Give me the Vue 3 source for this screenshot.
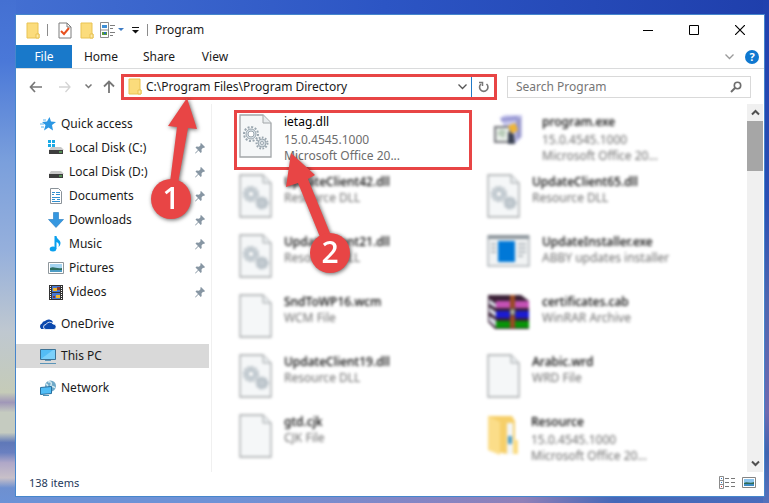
<template>
  <div class="desktop">
    <main class="window">
      <header class="titlebar">
        <svg class="qa-folder" width="14" height="17" viewBox="0 0 14 17">
          <path d="M1 1h11v11h1v4H1z" fill="#fbdc7c" stroke="#e9c353" />
          <path d="M10 16v-4h3v4z" fill="#fce9a8" stroke="#e9c353" />
        </svg>
        <span class="divider"></span>
        <button class="tool tool--check" aria-label="Properties">
          <svg width="14" height="17" viewBox="0 0 14 17">
            <path d="M1 1h8l4 4v11H1z" fill="#fff" stroke="#7d7d7d" />
            <path d="M9 1v4h4" fill="none" stroke="#7d7d7d" />
            <path d="M3 9l3 3 5-6" fill="none" stroke="#e8501e" stroke-width="2" />
          </svg>
        </button>
        <button class="tool tool--folder" aria-label="New folder">
          <svg width="14" height="17" viewBox="0 0 14 17">
            <path d="M1 1h11v11h1v4H1z" fill="#fbdc7c" stroke="#e9c353" />
            <path d="M10 16v-4h3v4z" fill="#fce9a8" stroke="#e9c353" />
          </svg>
        </button>
        <button class="tool tool--view" aria-label="View options">
          <svg width="24" height="16" viewBox="0 0 24 16">
            <path d="M.5.5h8v15h-8zM.5 8h8" fill="#fff" stroke="#8b8b8b" />
            <path d="M2 3h5v3H2z" fill="#3f8fd6" />
            <path d="M2 10h5v3H2z" fill="#5a9a3c" />
            <path d="M4 10h2v2H4z" fill="#2c6fc0" />
            <path d="M10 3.500h5M10 6.500h3M10 10.500h5M10 13.500h3" stroke="#7d7d7d" />
            <path d="M18 6h6l-3 3z" fill="#3f7cc4" />
          </svg>
        </button>
        <button class="tool tool--more" aria-label="Customize toolbar">
          <svg width="7" height="8" viewBox="0 0 7 8">
            <path d="M0 1.500h7" stroke="#111" />
            <path d="M0 4h7L3.500 7.500z" fill="#111" />
          </svg>
        </button>
        <span class="divider"></span>
        <h1 class="title">Program</h1>
        <div class="window-buttons">
          <button aria-label="Minimize">
            <svg width="10" height="10" viewBox="0 0 10 10"><path d="M0 5.500h10" stroke="#000" /></svg>
          </button>
          <button aria-label="Maximize">
            <svg width="10" height="10" viewBox="0 0 10 10"><path d="M.5.5h9v9h-9z" fill="none" stroke="#000" /></svg>
          </button>
          <button aria-label="Close">
            <svg width="10" height="10" viewBox="0 0 10 10"><path d="M0 0l10 10M10 0L0 10" stroke="#000" stroke-width="1.200" /></svg>
          </button>
        </div>
      </header>

      <nav class="tabs">
        <button class="tab tab--file">File</button>
        <button class="tab tab--home">Home</button>
        <button class="tab tab--share">Share</button>
        <button class="tab tab--view">View</button>
        <button class="expand" aria-label="Expand the ribbon">
          <svg width="9" height="6" viewBox="0 0 9 6"><path d="M.5.5l4 4 4-4" fill="none" stroke="#9a9a9a" stroke-width="1.300" /></svg>
        </button>
        <button class="help" aria-label="Help">?</button>
      </nav>

      <div class="navbar">
        <button class="nav nav--back" aria-label="Back">
          <svg width="13" height="12" viewBox="0 0 13 12"><path d="M13 6H1.500M6 1L1.500 6 6 11" fill="none" stroke="#777" stroke-width="1.700" /></svg>
        </button>
        <button class="nav nav--forward" aria-label="Forward">
          <svg width="12" height="12" viewBox="0 0 12 12"><path d="M0 6h11M6.500 1L11 6l-4.500 5" fill="none" stroke="#d4d4d4" stroke-width="1.300" /></svg>
        </button>
        <button class="nav nav--recent" aria-label="Recent locations">
          <svg width="7" height="5" viewBox="0 0 7 5"><path d="M.5.5l3 3 3-3" fill="none" stroke="#777" stroke-width="1.500" /></svg>
        </button>
        <button class="nav nav--up" aria-label="Up">
          <svg width="12" height="13" viewBox="0 0 12 13"><path d="M6 13V1.500M1 6.500l5-5 5 5" fill="none" stroke="#777" stroke-width="1.800" /></svg>
        </button>
        <div class="address">
          <svg width="14" height="17" viewBox="0 0 14 17">
            <path d="M1 1h11v11h1v4H1z" fill="#fbdc7c" stroke="#e9c353" />
            <path d="M10 16v-4h3v4z" fill="#fce9a8" stroke="#e9c353" />
          </svg>
          <input type="text" aria-label="Address" v-model="path" />
          <button class="address-drop" aria-label="Previous locations">
            <svg width="9" height="6" viewBox="0 0 9 6"><path d="M.5.5l4 4 4-4" fill="none" stroke="#555" stroke-width="1.300" /></svg>
          </button>
          <button class="refresh" aria-label="Refresh">
            <svg width="11" height="12" viewBox="0 0 11 12">
              <path d="M8.500 3a4.200 4.200 0 1 1-5.500 0" fill="none" stroke="#777" stroke-width="1.600" />
              <path d="M1 1.500h3.500V5" fill="none" stroke="#777" stroke-width="1.500" />
            </svg>
          </button>
        </div>
        <div class="search">
          <input type="search" aria-label="Search Program" placeholder="Search Program" />
          <svg width="12" height="12" viewBox="0 0 12 12">
            <circle cx="7.500" cy="4.500" r="3.200" fill="none" stroke="#6d6d6d" stroke-width="1.600" />
            <path d="M5 7L1 11" stroke="#6d6d6d" stroke-width="2" />
          </svg>
        </div>
      </div>

      <div class="body">
        <aside class="sidebar">
          <a
            v-for="place in places"
            :key="place.name"
            href="#"
            :class="['place', { 'place--child': place.pinned, 'place--root': place.root, 'place--active': place.active }]"
          >
            <svg class="place-icon" width="16" height="16" viewBox="0 0 16 16">
              <!-- Quick access star -->
              <g v-if="place.icon === 'star'">
                <path d="M9.500 1l1.500 4.500 5 .5-4 3 1 5.500-4.500-3L4 14.500 5.500 9 2 6l5-.5z" fill="#2b97e3" />
                <path d="M0 8h4M1 11h3M3 4h3" stroke="#5ab3ee" />
              </g>
              <!-- Disks -->
              <g v-else-if="place.icon === 'disk' || place.icon === 'system'">
                <path d="M3 7h10l3 3H1z" fill="#c9c9c9" />
                <path d="M1 10h14v4H1z" fill="#3d3d3d" />
                <path d="M11 12h3" stroke="#6de06d" />
                <g v-if="place.icon === 'system'">
                  <path d="M0 0h7v7H0z" fill="#fff" />
                  <path d="M0 0h3v3H0zM4 0h3v3H4zM0 4h3v3H0zM4 4h3v3H4z" fill="#19a9e5" />
                </g>
              </g>
              <!-- Documents -->
              <g v-else-if="place.icon === 'documents'">
                <path d="M2.500.5h8l3 3v12h-11z" fill="#fff" stroke="#8a9299" />
                <path d="M4 4.500h3M8 4.500h4M4 6.500h2M8 6.500h4M4 9.500h8M4 11.500h3M9 11.500h3M4 13.500h8" stroke="#2f8fd0" />
              </g>
              <!-- Downloads -->
              <path v-else-if="place.icon === 'downloads'" d="M5.500.5h5v7h5L8 15.500.500 7.500h5z" fill="#3597e0" stroke="#2379bd" stroke-width=".6" />
              <!-- Music -->
              <g v-else-if="place.icon === 'music'" fill="#0aa0ee">
                <ellipse cx="5" cy="13" rx="3.300" ry="2.500" />
                <path d="M6.500 0h2c0 3 4 4 4 7 0 2-1 3-2 4 1-3 0-4-2-5v7h-2z" />
              </g>
              <!-- Pictures -->
              <g v-else-if="place.icon === 'pictures'">
                <path d="M.5 2.500h15v11H.500z" fill="#fff" stroke="#8f979c" />
                <path d="M2 4h12v8H2z" fill="#a5d4f1" />
                <path d="M2 8c4-2 6 1 12 0v2H2z" fill="#2c6d60" />
                <path d="M2 10h12v2H2z" fill="#4d9cc4" />
              </g>
              <!-- Videos -->
              <g v-else-if="place.icon === 'videos'">
                <path d="M1 1h14v15H1z" fill="#333" />
                <path d="M2.500 2v14M13.500 2v14" stroke="#fff" stroke-dasharray="1 1" />
                <path d="M4 2h8v6H4zM4 9h8v6H4z" fill="#4777d1" />
                <path d="M5 4h4v3H5zM8 11h4v3H8z" fill="#f0b62c" />
                <path d="M9 3h3v3H9zM5 12h2v2H5z" fill="#873b32" />
              </g>
              <!-- OneDrive -->
              <g v-else-if="place.icon === 'cloud'">
                <path d="M1 12.500a3 3 0 0 1 1-5 3 3 0 0 1 3-2.500 5 5 0 0 1 8 1L5 13H1z" fill="#0b48ad" />
                <path d="M6 13.500a2.500 2.500 0 0 1 0-5 4 4 0 0 1 7-.5 2.800 2.800 0 0 1 1 5.500z" fill="#0b48ad" stroke="#fff" stroke-width=".8" />
              </g>
              <!-- This PC -->
              <g v-else-if="place.icon === 'pc'">
                <path d="M.5 1.500h15v10H.500z" fill="#54bdf5" stroke="#3c7295" />
                <path d="M1 11L13 2h2v9z" fill="#7bd0fa" />
                <path d="M5 12.500h6M0 15.500h16" stroke="#5b94b7" />
              </g>
              <!-- Network -->
              <g v-else>
                <circle cx="10.500" cy="6" r="5.500" fill="#6fa9c8" />
                <path d="M8 2c3-1 4 1 3 3s3 1 4 3M6 4c2 1 2 2 1 3" fill="none" stroke="#d2e8f0" stroke-width="1.500" />
                <path d="M.5 7.500l11-1v7l-11 1z" fill="#51bdf6" stroke="#286f9e" />
                <path d="M3 15.500h6" stroke="#4b8fb4" />
              </g>
            </svg>
            <span class="place-name">{{ place.name }}</span>
            <svg v-if="place.pinned" class="pin" width="10" height="11" viewBox="0 0 10 11">
              <path d="M6 0l4 4-1 1-1-.3L6.500 6.500 6.700 9l-1 1L3.500 7.500.500 10.500 0 10l3-3L.5 4.500l1-1 2.500.2L5.700 2 5.200 1z" fill="#8796a3" />
            </svg>
          </a>
        </aside>

        <section class="files">
          <button
            v-for="file in files"
            :key="file.name"
            :class="['file', file.marked ? 'file--marked' : 'file--blurred', { 'file--detailed': file.lines.length > 1 }]"
          >
            <svg v-if="file.icon === 'doc' || file.icon === 'dll'" width="33" height="44" viewBox="0 0 33 44">
              <path d="M1 1h23l8 8v34H1z" fill="#f5f7f8" stroke="#a2a6a8" stroke-width="1.300" />
              <path d="M24 1v8h8" fill="#e8ecee" stroke="#a2a6a8" />
              <g v-if="file.icon === 'dll'" fill="none" stroke="#9aa6af">
                <circle cx="12" cy="20" r="7" stroke-width="2" stroke-dasharray="2 1.660" />
                <circle cx="12" cy="20" r="5" fill="#dbe3e8" />
                <circle cx="12" cy="20" r="3" fill="#fff" />
                <circle cx="23" cy="29" r="5.500" stroke-width="2" stroke-dasharray="1.700 1.440" />
                <circle cx="23" cy="29" r="4" fill="#d3dbe0" />
                <circle cx="23" cy="29" r="1.500" fill="#fff" />
              </g>
            </svg>
            <svg v-else-if="file.icon === 'setup'" width="43" height="44" viewBox="0 0 43 44">
              <path d="M12 4l6-3h17v22l-6 6H16V6z" fill="#c8c8ee" />
              <path d="M14 4l17-2v4l-17 2z" fill="#9a9ad4" />
              <path d="M29 6l5-3v20l-5 3z" fill="#9c9ccb" />
              <path d="M8 13h15v15H8z" fill="#e9efe9" stroke="#77777e" stroke-width="2" />
              <path d="M10 20l4-5 5 2-2 7z" fill="#b9ccb9" />
              <path d="M21 12l7-3 3 7-6 4z" fill="#efb535" />
              <path d="M21 18l6 2 1 10h-7z" fill="#3c4354" />
            </svg>
            <svg v-else-if="file.icon === 'app'" width="43" height="44" viewBox="0 0 43 44">
              <path d="M1 2h41v30H1z" fill="#f1f3f4" stroke="#aeb4b8" stroke-width="1.500" />
              <path d="M1 1h41v4H1z" fill="#8d969c" />
              <path d="M11 7h17v21H11z" fill="#0078d7" />
              <path d="M4 10h5M4 14h5M4 18h5M31 10h8M31 14h8M31 18h8M31 22h5" stroke="#b5bbbf" stroke-width="2" />
            </svg>
            <svg v-else-if="file.icon === 'rar'" width="43" height="44" viewBox="0 0 43 44">
              <path d="M1 1h33l8 6v28H8l-7-7z" fill="#3a2036" />
              <path d="M2 5l7 5v4L2 10zM2 13l7 5v5l-7-5zM2 22l7 4v7l-7-6z" fill="#d9dce6" />
              <path d="M9 7h33v7H9z" fill="#c451b5" />
              <path d="M9 17h33v7H9z" fill="#1b1bd2" />
              <path d="M9 27h33v7H9z" fill="#079407" />
              <path d="M23 1h5v33h-5z" fill="#994a24" />
              <path d="M23 15h5v6h-5z" fill="#bbb8a3" stroke="#444" />
            </svg>
            <svg v-else width="32" height="44" viewBox="0 0 32 44">
              <path d="M1 2h24l3 5v19l3 1v13H20L1 36z" fill="#f6cf69" />
              <path d="M1 2l12 6v33L1 36z" fill="#fbdd89" />
              <path d="M20 9h6v31h-6z" fill="#f2f6f8" />
              <path d="M21 22h4v8h-4z" fill="#4f9dc6" />
              <path d="M26 26h5v14h-5z" fill="#fbdc82" />
            </svg>
            <span class="file-text">
              <span class="file-name">{{ file.name }}</span>
              <span v-for="line in file.lines" :key="line" class="file-line">{{ line }}</span>
            </span>
          </button>
        </section>

        <div class="scrollbar">
          <button class="scroll-up" aria-label="Scroll up">
            <svg width="9" height="7" viewBox="0 0 9 7"><path d="M1 5.500L4.500 2 8 5.500" fill="none" stroke="#505050" stroke-width="2" /></svg>
          </button>
          <div class="scroll-thumb"></div>
          <button class="scroll-down" aria-label="Scroll down">
            <svg width="9" height="7" viewBox="0 0 9 7"><path d="M1 1.500L4.500 5 8 1.500" fill="none" stroke="#505050" stroke-width="2" /></svg>
          </button>
        </div>
      </div>

      <footer class="status">
        <span>138 items</span>
        <div class="modes">
          <button aria-label="Details view">
            <svg width="16" height="13" viewBox="0 0 16 13">
              <path d="M.5.5h4v12h-4zM.5 4.500h4M.5 8.500h4" fill="#fff" stroke="#8b8b8b" />
              <path d="M6 2.500h4M12 2.500h4M6 6.500h4M12 6.500h4M6 10.500h4M12 10.500h4" stroke="#777" />
              <path d="M2 2h1v1H2zM2 6h1v1H2z" fill="#2c78c4" />
              <path d="M2 10h1v1H2z" fill="#d33" />
            </svg>
          </button>
          <button aria-label="Large icons view">
            <svg width="14" height="11" viewBox="0 0 14 11">
              <path d="M.5.5h13v10H.500z" fill="#fff" stroke="#858585" />
              <path d="M2 2h10v7H2z" fill="#8cc5ee" />
              <path d="M2 6c3-2 6 1 10-1v2H2z" fill="#2f6b56" />
              <path d="M2 7h10v2H2z" fill="#3d8cc4" />
            </svg>
          </button>
        </div>
      </footer>

      <svg class="callouts" width="360" height="290" viewBox="0 0 360 290">
        <g v-for="mark in callouts" :key="mark.label" class="callout">
          <path :d="mark.arrow" fill="#e84545" />
          <circle :cx="mark.x" :cy="mark.y" r="20" fill="#e84545" />
          <text :x="mark.x" :y="mark.y + 10" text-anchor="middle">{{ mark.label }}</text>
        </g>
      </svg>
    </main>
  </div>
</template>

<script setup>
import { ref } from 'vue';

const path = ref('C:\\Program Files\\Program Directory');

const places = [
  { name: 'Quick access', icon: 'star' },
  { name: 'Local Disk (C:)', icon: 'system', pinned: true },
  { name: 'Local Disk (D:)', icon: 'disk', pinned: true },
  { name: 'Documents', icon: 'documents', pinned: true },
  { name: 'Downloads', icon: 'downloads', pinned: true },
  { name: 'Music', icon: 'music', pinned: true },
  { name: 'Pictures', icon: 'pictures', pinned: true },
  { name: 'Videos', icon: 'videos', pinned: true },
  { name: 'OneDrive', icon: 'cloud', root: true },
  { name: 'This PC', icon: 'pc', root: true, active: true },
  { name: 'Network', icon: 'network', root: true }
];

const files = [
  { name: 'ietag.dll', icon: 'dll', lines: ['15.0.4545.1000', 'Microsoft Office 20...'], marked: true },
  { name: 'program.exe', icon: 'setup', lines: ['15.0.4545.1000', 'Microsoft Office 20...'] },
  { name: 'UpdateClient42.dll', icon: 'dll', lines: ['Resource DLL'] },
  { name: 'UpdateClient65.dll', icon: 'dll', lines: ['Resource DLL'] },
  { name: 'UpdateClient21.dll', icon: 'dll', lines: ['Resource DLL'] },
  { name: 'UpdateInstaller.exe', icon: 'app', lines: ['ABBY updates installer'] },
  { name: 'SndToWP16.wcm', icon: 'doc', lines: ['WCM File'] },
  { name: 'certificates.cab', icon: 'rar', lines: ['WinRAR Archive'] },
  { name: 'UpdateClient19.dll', icon: 'dll', lines: ['Resource DLL'] },
  { name: 'Arabic.wrd', icon: 'doc', lines: ['WRD File'] },
  { name: 'gtd.cjk', icon: 'doc', lines: ['CJK File'] },
  { name: 'Resource', icon: 'folder', lines: ['15.0.4545.1000', 'Microsoft Office 20...'] }
];

const callouts = [
  { label: '1', x: 155, y: 184, arrow: 'M171 83L181 114 172 113 162 168 154 167 161 112 152 111z' },
  { label: '2', x: 314, y: 238, arrow: 'M275 138L299 160 292 164 314 218 304 222 282 168 270 172z' }
];
</script>

<style>
body {
  margin: 0;
}
</style>

<style scoped>
* {
  box-sizing: border-box;
}

.desktop {
  min-height: 100vh;
  padding: 14px 4px 6px 15px;
  font: 12px/16px "Noto Sans", "Open Sans", sans-serif;
  color: #1a1a1a;
  background:
    linear-gradient(180deg, #4470d2 0, #4a78d8 12%, #7a9fdc 32%, #96b0dc 50%, #bfc8d0 66%, #c5cbb8 78%, #a097b8 80%, #c5cbc0 82%, #c5cbc0 86%, #5f78b8 88%, #6a80c0 90%, #b0a8c8 92%, #c8c0c8 95%, #6e90d0 97%, #6c92d6 100%) left / 16px 100% no-repeat,
    linear-gradient(180deg, #2040ae 0, #2a50b4 40%, #4f67b0 60%, #6e6ab0 82%, #3f64b0 90%, #5672bc 100%) right / 6px 100% no-repeat,
    linear-gradient(90deg, #6c92d6 0, #6f92d6 30%, #8585c4 55%, #9080b8 68%, #4568b8 80%, #4a6cbc 100%) bottom / 100% 8px no-repeat,
    linear-gradient(90deg, #4470d2 0, #2c55c4 50%, #1f3fac 100%);
}

button {
  display: flex;
  align-items: center;
  justify-content: center;
  padding: 0;
  border: 0;
  background: none;
  color: inherit;
  font: inherit;
}

input {
  min-width: 0;
  padding: 0;
  border: 0;
  outline: 0;
  background: none;
  color: inherit;
  font: inherit;
}

svg {
  display: block;
  flex-shrink: 0;
}

.window {
  position: relative;
  display: flex;
  flex-direction: column;
  border: 1px solid #4686cc;
  background: #fff;
}

.titlebar {
  display: flex;
  align-items: center;
  height: 30px;
  padding: 0 1px 0 10px;
}

.divider {
  width: 1px;
  height: 12px;
  background: #8c8c8c;
}

.qa-folder {
  margin-right: 7px;
}

.tool--check {
  margin-left: 10px;
}

.tool--folder {
  margin-left: 8px;
}

.tool--view {
  margin-left: 6px;
}

.tool--more {
  margin: 0 8px;
}

.title {
  margin: 0 auto 0 7px;
  font-size: 12px;
  font-weight: 400;
}

.window-buttons {
  display: flex;
}

.window-buttons button {
  width: 46px;
  height: 28px;
}

.tabs {
  display: flex;
  align-items: center;
  height: 24px;
  border-bottom: 1px solid #dadbdc;
}

.tab {
  height: 23px;
}

.tab--file {
  width: 56px;
  background: #1979ca;
  color: #fff;
}

.tab--home {
  width: 58px;
}

.tab--share {
  width: 58px;
}

.tab--view {
  width: 54px;
}

.expand {
  margin-left: auto;
}

.help {
  width: 14px;
  height: 14px;
  margin: 0 5px 0 11px;
  border-radius: 50%;
  background: #0f78d0;
  color: #fff;
  font-size: 11px;
  font-weight: 700;
}

.navbar {
  display: flex;
  align-items: center;
  height: 35px;
  padding: 0 13px;
}

.nav--forward {
  margin-left: 17px;
}

.nav--recent {
  margin-left: 14px;
}

.nav--up {
  margin: 0 6px 0 11px;
}

.address {
  display: flex;
  flex: 370;
  align-items: center;
  height: 26px;
  border: 3px solid #e84545;
}

.address > svg {
  margin: 0 4px;
}

.address input {
  flex: 1;
}

.address-drop {
  width: 17px;
}

.refresh {
  width: 23px;
  height: 20px;
  border-left: 1px solid #2079c7;
}

.search {
  display: flex;
  flex: 226;
  align-items: center;
  height: 22px;
  margin-left: 10px;
  padding: 0 8px;
  border: 1px solid #d9d9d9;
}

.search input {
  flex: 1;
}

.search input::placeholder {
  color: #767676;
  opacity: 1;
}

.body {
  display: flex;
}

.sidebar {
  width: 196px;
  padding: 8px 2px 0 0;
  border-right: 1px solid #f0f0f0;
}

.place {
  display: flex;
  align-items: center;
  height: 24px;
  padding: 0 4px 0 24px;
  color: inherit;
  text-decoration: none;
}

.place--child {
  padding-left: 32px;
}

.place--root {
  margin-top: 8px;
}

.place--active {
  background: #d9d9d9;
}

.place-name {
  flex: 1;
  margin-left: 5px;
}

.files {
  display: grid;
  flex: 1;
  grid-template-columns: 1fr 1fr;
  column-gap: 10px;
  padding: 6px 27px 2px 22px;
}

.file {
  display: flex;
  align-items: flex-start;
  justify-content: flex-start;
  gap: 12px;
  height: 60px;
  padding: 1px 2px;
  border: 3px solid transparent;
  text-align: left;
}

.file--marked {
  border-color: #e84545;
}

.file--blurred {
  filter: blur(0.125em);
}

.file-text {
  display: flex;
  flex-direction: column;
  min-width: 0;
}

.file-name {
  color: #000;
}

.file--blurred .file-name {
  font-weight: 500;
}

.file-line {
  color: #6d6d6d;
}

.file--detailed .file-name {
  margin-bottom: 2px;
}

.scrollbar {
  display: flex;
  flex-direction: column;
  width: 16px;
  margin-right: 1px;
  background: #f0f0f0;
}

.scroll-up,
.scroll-down {
  height: 17px;
}

.scroll-thumb {
  height: 50px;
  background: #a6a6a6;
}

.scroll-down {
  margin-top: auto;
}

.status {
  display: flex;
  align-items: center;
  justify-content: space-between;
  height: 24px;
  padding: 0 8px 3px 13px;
  color: #1e395b;
  font-size: 11px;
}

.modes {
  display: flex;
  align-items: center;
  gap: 7px;
}

.callouts {
  position: absolute;
  top: 0;
  left: 0;
  pointer-events: none;
}

.callout {
  filter: drop-shadow(1px 1px 2px rgba(0, 0, 0, 0.6));
}

.callout text {
  fill: #fff;
  font-family: "Open Sans", "Noto Sans", sans-serif;
  font-size: 30px;
  font-weight: 600;
}
</style>
